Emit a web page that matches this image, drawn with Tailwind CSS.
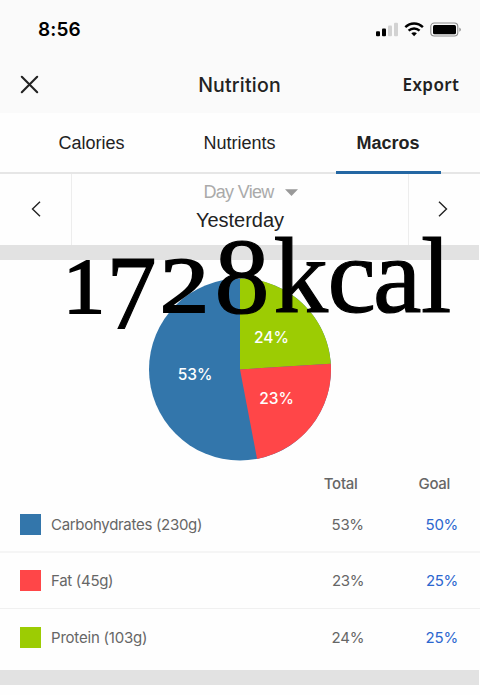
<!DOCTYPE html>
<html lang="en">
<head>
    <meta charset="UTF-8">
    <meta name="viewport" content="width=device-width, initial-scale=1.0">
    <title>Nutrition</title>
    <script src="https://cdn.jsdelivr.net/npm/@tailwindcss/browser@4"></script>
</head>
<body class="bg-[#fefefe] font-['Inter',sans-serif] text-[#222]">
    <div class="relative w-[480px] h-[695px] overflow-hidden flex flex-col">
        <!-- Status bar -->
        <div class="h-[57px] bg-[#fafafa] flex items-center justify-between pl-[38px] pr-[18px] pt-[2px] shrink-0">
            <span class="text-[19px] font-semibold text-black tracking-[0.1px] pt-[2px]">8:56</span>
            <svg width="86" height="16" viewBox="0 0 86 16">
                <rect x="0" y="9.3" width="4" height="5" rx="1"/>
                <rect x="6" y="6.5" width="4" height="7.8" rx="1"/>
                <rect x="12" y="3.5" width="4" height="10.8" rx="1" fill="#d2d2d2"/>
                <rect x="18" y="0.7" width="4" height="13.6" rx="1" fill="#d2d2d2"/>
                <g fill="none" stroke="#000" stroke-width="2.4">
                    <path d="M29.3 5.2C34.4 0.3 41.8 0.3 46.9 5.2"/>
                    <path d="M32.6 8.7C35.8 5.7 40.4 5.7 43.6 8.7"/>
                </g>
                <path d="M35.3 11.3C37 9.9 39.2 9.9 40.9 11.3L38.1 14.2Z"/>
                <rect x="54.8" y="1" width="27" height="13" rx="3.5" fill="none" stroke="#8c8c8c" stroke-width="1.1"/>
                <rect x="57" y="3" width="23" height="9.2" rx="1.5"/>
                <path d="M83.4 5.5C85.4 6.3 85.4 8.9 83.4 9.7Z" fill="#8c8c8c"/>
            </svg>
        </div>

        <!-- Title bar -->
        <div class="h-14 bg-[#fafafa] grid grid-cols-3 items-center pl-5 pr-[21px] shrink-0">
            <svg class="-mt-[2px]" width="19" height="19" viewBox="0 0 19 19" fill="none" stroke="#222" stroke-width="2.1" stroke-linecap="round"><path d="M1.8 1.8L17.2 17.2M17.2 1.8L1.8 17.2"/></svg>
            <h1 class="text-center text-[19.5px] font-medium tracking-[0.2px] pt-[2px]">Nutrition</h1>
            <span class="text-right text-[17px] font-semibold font-['Noto_Sans',sans-serif] tracking-[0.4px] -mr-[0.4px]">Export</span>
        </div>

        <!-- Tabs -->
        <div class="h-[61px] border-b-2 border-[#e6e6e6] flex justify-center gap-[44px] font-['Liberation_Sans',sans-serif] text-[18px] shrink-0">
            <span class="w-[104px] h-[61px] leading-[60px] text-center">Calories</span>
            <span class="w-[104px] h-[61px] leading-[60px] text-center">Nutrients</span>
            <span class="w-[105px] h-[61px] leading-[60px] text-center font-bold border-b-3 border-[#2467a3]">Macros</span>
        </div>

        <!-- Date picker -->
        <div class="h-[71px] flex shrink-0">
            <div class="w-[72px] border-r border-[#ededed] flex items-center justify-center pb-[2px]">
                <svg width="10" height="16" viewBox="0 0 10 16" fill="none" stroke="#222" stroke-width="1.4"><path d="M9 0.7L1.5 8L9 15.3"/></svg>
            </div>
            <div class="flex-1 flex flex-col items-center font-['Liberation_Sans',sans-serif] pt-[5px]">
                <div class="flex items-center gap-[11px] pl-[21px] text-[18px] leading-[26px] text-[#aaa]">
                    <span class="tracking-[-0.7px]">Day View</span>
                    <svg width="13" height="7" viewBox="0 0 13 7" fill="#999"><path d="M0 0.3H13L6.5 7Z"/></svg>
                </div>
                <span class="text-[20px] leading-[31px]">Yesterday</span>
            </div>
            <div class="w-[72px] border-l border-[#ededed] flex items-center justify-center pb-[2px] pr-[3px]">
                <svg width="10" height="16" viewBox="0 0 10 16" fill="none" stroke="#222" stroke-width="1.4"><path d="M1 0.7L8.5 8L1 15.3"/></svg>
            </div>
        </div>

        <div class="h-[15px] bg-[#e2e2e2] mr-px shrink-0"></div>

        <!-- Macros chart -->
        <div class="h-[209px] pt-[17px] flex justify-center shrink-0">
            <svg width="184" height="184" viewBox="-92 -92.5 184 184" font-family="Inter, sans-serif" font-size="15.5" font-weight="500" fill="#fff" text-anchor="middle">
                <circle r="91" fill="#3376ab"/>
                <path d="M0 0V-91A91 91 0 0 1 90.8 -5.7Z" fill="#9ccc03"/>
                <path d="M0 0L90.8 -5.7A91 91 0 0 1 17.1 89.4Z" fill="#ff4648"/>
                <text x="31.5" y="-26.5">24%</text>
                <text x="36.5" y="34.5">23%</text>
                <text x="-45" y="10.5">53%</text>
            </svg>
        </div>

        <!-- Totals table -->
        <div class="h-[28px] flex items-center justify-end pr-[30px] gap-[61px] pt-[3px] text-[15px] font-medium text-[#666] tracking-[-0.3px] shrink-0">
            <span>Total</span>
            <span>Goal</span>
        </div>
        <div class="h-[56px] border-b-2 border-[#f5f5f5] flex items-center pl-5 pr-[22px] text-[15px] text-[#666] tracking-[-0.3px] shrink-0">
            <span class="size-[21px] bg-[#3376ab] mr-[10px]"></span>
            <span class="flex-1 pt-[2px]">Carbohydrates (230g)</span>
            <span class="w-[63px] mr-[31px] pt-[2px]">53%</span>
            <span class="text-[#2c66cf] pt-[2px]">50%</span>
        </div>
        <div class="h-[56px] border-b border-[#f0f0f0] flex items-center pl-5 pr-[22px] text-[15px] text-[#666] tracking-[-0.3px] shrink-0">
            <span class="size-[21px] bg-[#ff4648] mr-[10px]"></span>
            <span class="flex-1 pt-px">Fat (45g)</span>
            <span class="w-[63px] mr-[31px] pt-px">23%</span>
            <span class="text-[#2c66cf] pt-px">25%</span>
        </div>
        <div class="h-[61px] pb-[4px] flex items-center pl-5 pr-[22px] text-[15px] text-[#666] tracking-[-0.2px] shrink-0">
            <span class="size-[21px] bg-[#9ccc03] mr-[10px]"></span>
            <span class="flex-1 pt-px">Protein (103g)</span>
            <span class="w-[63px] mr-[31px] pt-px">24%</span>
            <span class="text-[#2c66cf] pt-px">25%</span>
        </div>
        <div class="h-[15px] bg-[#e2e2e2] mr-px shrink-0"></div>

        <!-- Calories caption laid over the chart, with old-style figures -->
        <svg class="absolute left-0 top-[220px]" width="480" height="130" viewBox="0 220 480 130" font-family="Liberation Serif, serif" stroke="#000" stroke-width="1.2">
            <text y="312"><tspan x="63" font-size="78" stroke-width="2" textLength="42" lengthAdjust="spacingAndGlyphs">1</tspan><tspan x="106.5" y="329" font-size="105" textLength="50" lengthAdjust="spacingAndGlyphs">7</tspan><tspan x="160" y="311.3" font-size="78" stroke-width="2" textLength="49" lengthAdjust="spacingAndGlyphs">2</tspan><tspan x="214.5" y="312.5" font-size="107" textLength="55" lengthAdjust="spacingAndGlyphs">8</tspan><tspan x="273.5 327.5 373 421" y="311.8" font-size="109">kcal</tspan></text>
        </svg>
    </div>
</body>
</html>
